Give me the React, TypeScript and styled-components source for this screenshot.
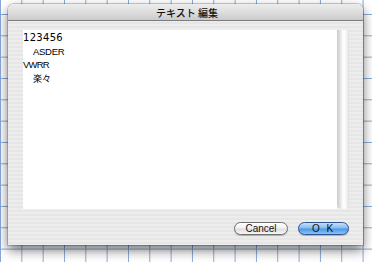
import styled, { createGlobalStyle } from "styled-components";

const Global = createGlobalStyle`
  html, body {
    margin: 0;
    height: 100%;
  }
  body {
    background-color: #ffffff;
    background-image:
      linear-gradient(to right, #86a8dc 1px, transparent 1px),
      linear-gradient(to bottom, #86a8dc 1px, transparent 1px);
    background-size: 21.33px 21.33px;
    background-position: 0 14px;
    font-family: "Liberation Sans", "Noto Sans CJK JP", sans-serif;
  }
`;

const Desktop = styled.div`
  padding: 4px 9px 0 8px;
`;

const Window = styled.div`
  width: 355px;
  height: 241px;
  display: flex;
  flex-direction: column;
  border-radius: 6px 6px 0 0;
  box-shadow: 0 0 0 1px rgba(0, 0, 0, 0.18), 0 5px 12px rgba(0, 0, 0, 0.55);
  background: repeating-linear-gradient(
    to bottom,
    #ededed 0px,
    #ededed 2px,
    #e6e6e6 2px,
    #e6e6e6 4px
  );
`;

const TitleBar = styled.div`
  height: 16px;
  border-radius: 6px 6px 0 0;
  border-bottom: 1px solid #7c7c7c;
  background: linear-gradient(to bottom, #ececec 0%, #dedede 50%, #cbcbcb 100%);
  display: flex;
  align-items: center;
  justify-content: center;
  font-family: "Noto Sans CJK JP", sans-serif;
  font-size: 10px;
  font-weight: 500;
  color: #111;
  padding-left: 3px;
`;

const Body = styled.div`
  flex: 1;
  display: flex;
  flex-direction: column;
  padding: 9px 14px 10px 15px;
`;

const Editor = styled.div`
  height: 179px;
  display: flex;
`;

const TextArea = styled.div`
  flex: 1;
  background: #ffffff;
  padding-top: 1px;
  display: flex;
  flex-direction: column;
`;

const Line = styled.div<{ $indent?: number; $spacing?: number; $size?: number; $font?: string }>`
  height: 13.5px;
  line-height: 13.5px;
  padding-left: ${(p) => p.$indent ?? 0}px;
  font-family: ${(p) => p.$font ?? `"Liberation Sans", "Noto Sans CJK JP", sans-serif`};
  font-size: ${(p) => p.$size ?? 9.5}px;
  letter-spacing: ${(p) => p.$spacing ?? 0}px;
  color: #000;
  white-space: pre;
`;

const Track = styled.div`
  width: 12px;
  border-radius: 0 0 5px 5px;
  background: linear-gradient(
    to right,
    #c9c9c9 0%,
    #dcdcdc 20%,
    #f8f8f8 45%,
    #ffffff 60%,
    #efefef 85%,
    #dddddd 100%
  );
`;

const Footer = styled.div`
  margin-top: 13px;
  display: flex;
  justify-content: flex-end;
  gap: 10px;
`;

const Button = styled.div<{ $primary?: boolean; $w: number }>`
  width: ${(p) => p.$w}px;
  height: 13px;
  box-sizing: border-box;
  border-radius: 7px;
  display: flex;
  align-items: center;
  justify-content: center;
  font-family: "Liberation Sans", sans-serif;
  font-size: 10px;
  color: #111;
  border: 1px solid ${(p) => (p.$primary ? "#2f5590" : "#6e6e6e")};
  background: ${(p) =>
    p.$primary
      ? "linear-gradient(to bottom, #c6e1fa 0%, #86bcf0 45%, #4f98e4 55%, #86c4f6 100%)"
      : "linear-gradient(to bottom, #ffffff 0%, #f2f2f2 45%, #dedede 55%, #f6f6f6 100%)"};
  box-shadow: 0 1px 1px rgba(0, 0, 0, 0.25);
  letter-spacing: ${(p) => (p.$primary ? "2px" : "0")};
`;

export default function App() {
  return (
    <>
      <Global />
      <Desktop>
        <Window>
          <TitleBar>テキスト 編集</TitleBar>
          <Body>
            <Editor>
              <TextArea>
                <Line $font={`"DejaVu Sans", sans-serif`} $size={10} $spacing={0.3}>
                  123456
                </Line>
                <Line $indent={10} $spacing={-0.3}>
                  ASDER
                </Line>
                <Line $spacing={-0.8}>VWRR</Line>
                <Line $indent={10} $size={9} $font={`"Noto Sans CJK JP", sans-serif`}>
                  楽々
                </Line>
              </TextArea>
              <Track />
            </Editor>
            <Footer>
              <Button $w={54}>Cancel</Button>
              <Button $w={51} $primary>
                O K
              </Button>
            </Footer>
          </Body>
        </Window>
      </Desktop>
    </>
  );
}
